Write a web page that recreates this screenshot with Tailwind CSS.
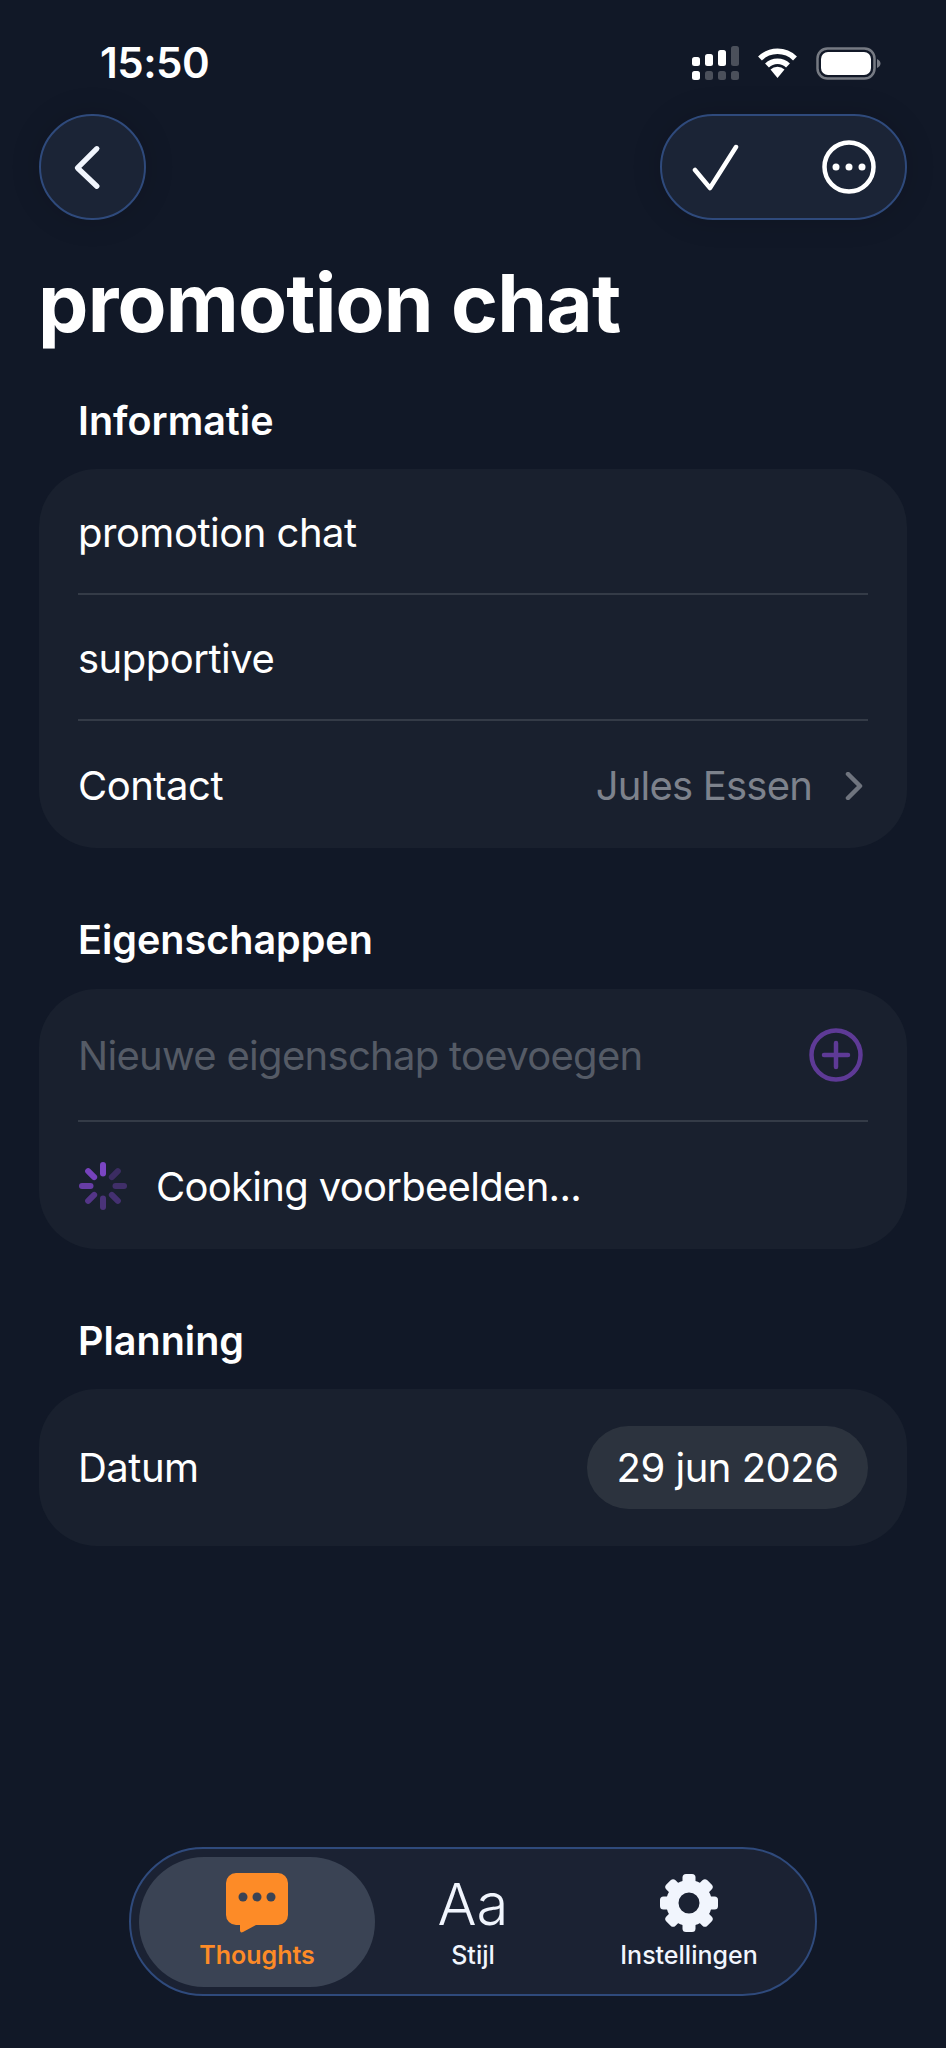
<!DOCTYPE html>
<html lang="nl">
<head>
  <meta charset="UTF-8">
  <meta name="viewport" content="width=device-width, initial-scale=1.0">
  <title>promotion chat</title>
  <script src="https://cdn.jsdelivr.net/npm/@tailwindcss/browser@4"></script>
</head>
<body class="bg-[#111827]">
  <div class="w-[946px] h-[2048px] flex flex-col overflow-hidden bg-[#111827] text-white font-[Inter,sans-serif]">

    <!-- status bar -->
    <div class="h-[114px] shrink-0 pt-[43px] pl-[100px] pr-[64px] flex justify-between items-start">
      <span class="text-[42px] leading-[40px] font-semibold tracking-[-0.5px]">15:50</span>
      <div class="flex items-center gap-[18px] mt-[3px]">
        <svg width="47" height="34" viewBox="0 0 47 34">
          <rect x="0" y="11" width="8" height="9" rx="2.5" fill="#fff"/>
          <rect x="13" y="8" width="8" height="12" rx="2.5" fill="#fff"/>
          <rect x="26" y="4" width="8" height="16" rx="2.5" fill="#fff"/>
          <rect x="39" y="0" width="8" height="20" rx="2.5" fill="#4b505b"/>
          <rect x="0" y="25" width="8" height="9" rx="2.5" fill="#fff"/>
          <rect x="13" y="25" width="8" height="9" rx="2.5" fill="#4b505b"/>
          <rect x="26" y="25" width="8" height="9" rx="2.5" fill="#4b505b"/>
          <rect x="39" y="25" width="8" height="9" rx="2.5" fill="#4b505b"/>
        </svg>
        <svg width="41" height="32" viewBox="0 0 41 32" fill="none" stroke="#fff" stroke-width="5.5">
          <path d="M3 11.500a25 25 0 0 1 35 0"/>
          <path d="M10 18.500a15 15 0 0 1 21 0"/>
          <path d="M13.500 22.500a10 10 0 0 1 14 0L20.500 31Z" fill="#fff" stroke="none"/>
        </svg>
        <svg width="66" height="33" viewBox="0 0 66 33">
          <rect x="1.500" y="1.500" width="57" height="30" rx="10" fill="none" stroke="#767a83" stroke-width="2.500"/>
          <rect x="5" y="5" width="50" height="23" rx="7" fill="#fff"/>
          <path d="M61 12c2.500 1 3.500 3 3.500 4.500S63.500 20 61 21Z" fill="#767a83"/>
        </svg>
      </div>
    </div>

    <!-- header buttons -->
    <div class="h-[106px] shrink-0 px-[39px] flex justify-between">
      <button class="w-[107px] h-[106px] rounded-full bg-[#1b2436] border-2 border-[#2f4a7c] shadow-[0_0_30px_rgba(0,0,0,0.15)] flex items-center justify-center">
        <svg width="107" height="106" viewBox="0 0 107 106" fill="none" stroke="#f1f5fd" stroke-width="5.500" stroke-linecap="round" stroke-linejoin="round">
          <path d="M58 34L38 54l20 19"/>
        </svg>
      </button>
      <div class="w-[247px] h-[106px] rounded-full bg-[#1b2436] border-2 border-[#2f4a7c] shadow-[0_0_30px_rgba(0,0,0,0.15)] flex items-center justify-between pl-[30px] pr-[29px]">
        <svg width="50" height="48" viewBox="0 0 50 48" fill="none" stroke="#fff" stroke-width="4.500" stroke-linecap="round" stroke-linejoin="round">
          <path d="M3 27l15 18L44 4"/>
        </svg>
        <svg width="54" height="54" viewBox="0 0 54 54" fill="none">
          <circle cx="27" cy="27" r="24.500" stroke="#fff" stroke-width="4.500"/>
          <circle cx="14" cy="27" r="3.500" fill="#fff"/>
          <circle cx="27" cy="27" r="3.500" fill="#fff"/>
          <circle cx="40" cy="27" r="3.500" fill="#fff"/>
        </svg>
      </div>
    </div>

    <h1 class="mt-[35px] h-[96px] px-[38px] text-[80px] leading-[96px] font-bold tracking-[-0.8px]">promotion chat</h1>

    <!-- Informatie -->
    <h2 class="mt-[49px] h-[40px] px-[78px] text-[39.500px] leading-[42px] font-semibold">Informatie</h2>
    <section class="mt-[29px] mx-[39px] rounded-[58px] bg-[#19202e] text-[40px] tracking-[-0.5px]">
      <div class="h-[126px] pt-[3px] mx-[39px] border-b-2 border-[#343b47] flex items-center">promotion chat</div>
      <div class="h-[126px] pt-[3px] mx-[39px] border-b-2 border-[#343b47] flex items-center">supportive</div>
      <div class="h-[127px] pt-[3px] mx-[39px] flex items-center justify-between">
        <span>Contact</span>
        <span class="flex items-center gap-[33px] mr-[5px] text-[#7d828c] tracking-[-0.8px]">Jules Essen
          <svg width="18" height="28" viewBox="0 0 18 28" fill="none" stroke="#6f747e" stroke-width="4.500" stroke-linecap="round" stroke-linejoin="round"><path d="M3 2l12 12L3 26"/></svg>
        </span>
      </div>
    </section>

    <!-- Eigenschappen -->
    <h2 class="mt-[71px] h-[40px] px-[78px] text-[39.500px] leading-[42px] font-semibold">Eigenschappen</h2>
    <section class="mt-[30px] mx-[39px] rounded-[58px] bg-[#19202e] text-[40px] tracking-[-0.7px]">
      <div class="h-[133px] mx-[39px] border-b-2 border-[#343b47] flex items-center justify-between">
        <span class="pt-[2px] text-[#555b66]">Nieuwe eigenschap toevoegen</span>
        <svg class="mr-[5px]" width="54" height="54" viewBox="0 0 54 54" fill="none" stroke="#5e3a96" stroke-width="4.500" stroke-linecap="round">
          <circle cx="27" cy="27" r="24.500"/>
          <path d="M27 15v24M15 27h24"/>
        </svg>
      </div>
      <div class="h-[127px] mx-[39px] flex items-center gap-[28px]">
        <svg width="50" height="50" viewBox="0 0 50 50" fill="none" stroke="#7b45c4" stroke-width="6" stroke-linecap="round">
          <path d="M25 4v8.500"/>
          <path d="M39.850 10.150l-6 6" opacity=".35"/>
          <path d="M46 25h-8.500" opacity=".4"/>
          <path d="M39.850 39.850l-6-6" opacity=".45"/>
          <path d="M25 46v-8.500" opacity=".5"/>
          <path d="M10.150 39.850l6-6" opacity=".6"/>
          <path d="M4 25h8.500" opacity=".8"/>
          <path d="M10.150 10.150l6 6" opacity=".95"/>
        </svg>
        <span class="pt-[2px]">Cooking voorbeelden...</span>
      </div>
    </section>

    <!-- Planning -->
    <h2 class="mt-[72px] h-[40px] px-[78px] text-[39.500px] leading-[40px] font-semibold">Planning</h2>
    <section class="mt-[28px] mx-[39px] rounded-[58px] bg-[#19202e] text-[40px] tracking-[-0.5px] h-[157px] px-[39px] flex items-center justify-between">
      <span>Datum</span>
      <span class="h-[83px] w-[281px] rounded-full bg-[#2c333e] flex items-center justify-center">29 jun 2026</span>
    </section>

    <!-- tab bar -->
    <nav class="mt-auto mb-[52px] mx-auto w-[688px] h-[149px] rounded-full bg-[#1b2233] border-2 border-[#2f4a7c] pl-[8px] pr-[10px] flex items-center">
      <div class="w-[236px] h-[130px] rounded-full bg-[#3a4354] flex flex-col items-center justify-center">
        <svg width="62" height="60" viewBox="0 0 62 60">
          <path d="M10 0h42a10 10 0 0 1 10 10v32a10 10 0 0 1-10 10H30L17 59c-2 1-3 0-3-2v-5h-4A10 10 0 0 1 0 42V10A10 10 0 0 1 10 0Z" fill="#fd8b27"/>
          <circle cx="17" cy="24" r="4.500" fill="#3a4354"/>
          <circle cx="31" cy="24" r="4.500" fill="#3a4354"/>
          <circle cx="45" cy="24" r="4.500" fill="#3a4354"/>
        </svg>
        <span class="mt-[7px] text-[25px] leading-[30px] font-semibold text-[#fd8b27]">Thoughts</span>
      </div>
      <div class="w-[196px] flex flex-col items-center">
        <span class="h-[60px] text-[58px] leading-[62px] font-light text-[#f1f5fd]">Aa</span>
        <span class="mt-[7px] text-[25px] leading-[30px] font-medium text-[#f1f5fd]">Stijl</span>
      </div>
      <div class="flex-1 flex flex-col items-center pl-[2px]">
        <svg width="60" height="60" viewBox="0 0 60 60" fill="#f1f5fd">
          <path fill-rule="evenodd" d="M30 7a23 23 0 1 0 0 46 23 23 0 0 0 0-46Zm0 12.500a10.500 10.500 0 1 1 0 21 10.500 10.500 0 0 1 0-21Z"/>
          <rect x="23.500" y="1" width="13" height="13" rx="3.500"/>
          <rect x="23.500" y="1" width="13" height="13" rx="3.500" transform="rotate(45 30 30)"/>
          <rect x="23.500" y="1" width="13" height="13" rx="3.500" transform="rotate(90 30 30)"/>
          <rect x="23.500" y="1" width="13" height="13" rx="3.500" transform="rotate(135 30 30)"/>
          <rect x="23.500" y="1" width="13" height="13" rx="3.500" transform="rotate(180 30 30)"/>
          <rect x="23.500" y="1" width="13" height="13" rx="3.500" transform="rotate(225 30 30)"/>
          <rect x="23.500" y="1" width="13" height="13" rx="3.500" transform="rotate(270 30 30)"/>
          <rect x="23.500" y="1" width="13" height="13" rx="3.500" transform="rotate(315 30 30)"/>
        </svg>
        <span class="mt-[7px] text-[25px] leading-[30px] font-medium text-[#f1f5fd]">Instellingen</span>
      </div>
    </nav>
  </div>
</body>
</html>
